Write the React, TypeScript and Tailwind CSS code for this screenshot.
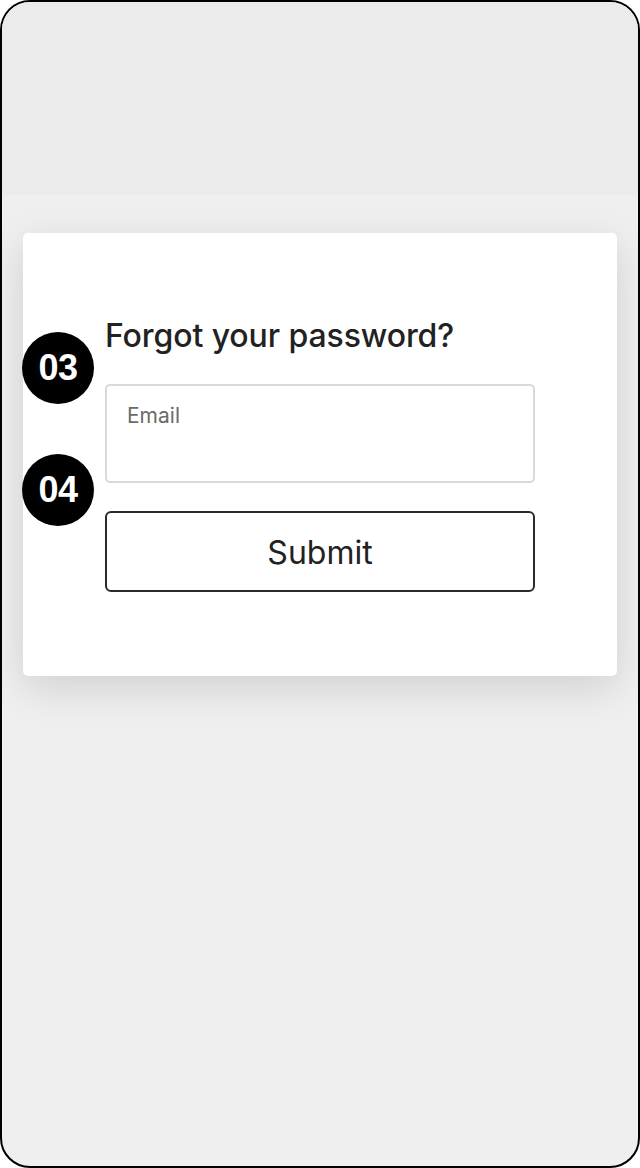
import React from "react";

function Badge({ label, top }: { label: string; top: string }) {
  return (
    <div
      className={`absolute left-[20px] ${top} w-[72px] h-[72px] rounded-full bg-black text-white flex items-center justify-center text-[36px] font-bold tracking-[-0.5px] z-10`}
      style={{ fontFamily: "'Liberation Sans', Arial, sans-serif" }}
    >
      {label}
    </div>
  );
}

export default function App() {
  return (
    <div
      className="relative w-[640px] h-[1168px] overflow-hidden rounded-[30px] border-2 border-black bg-[#efefef] flex flex-col"
      style={{ fontFamily: "Inter, 'Liberation Sans', Arial, sans-serif" }}
    >
      <div className="h-[193px] shrink-0 bg-[#ebebeb]" />
      <div className="pt-[38px] px-[21px]">
        <div className="bg-white rounded-[5px] shadow-[0_12px_40px_rgba(0,0,0,0.13)] px-[82px] pt-[85px] pb-[84px]">
          <h1 className="text-[32px] leading-[36px] font-medium text-[#222] tracking-[-0.1px]">Forgot your password?</h1>
          <div className="mt-[30px] h-[99px] rounded-[5px] border-2 border-[#d9d9d9] px-[20px] pt-[17px]">
            <span className="text-[21px] leading-[26px] text-[#6b6b6b]">Email</span>
          </div>
          <button className="mt-[28px] w-full h-[81px] rounded-[6px] border-2 border-[#2a2a2a] pt-[2px] text-[32px] text-[#222] bg-white">
            Submit
          </button>
        </div>
      </div>
      <Badge label="03" top="top-[330px]" />
      <Badge label="04" top="top-[452px]" />
    </div>
  );
}
